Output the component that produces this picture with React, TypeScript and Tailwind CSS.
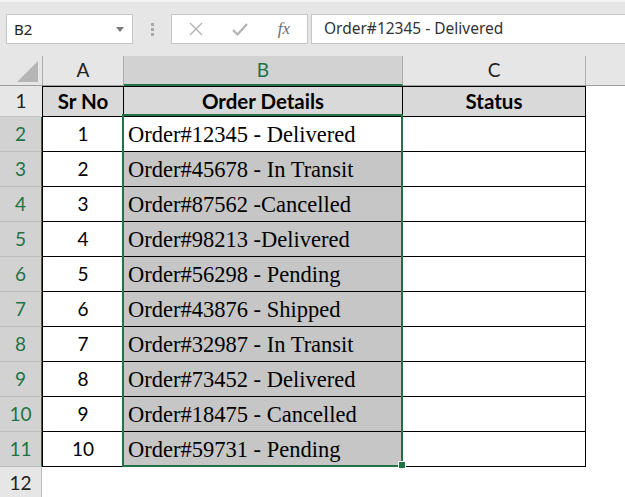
import { clsx } from 'clsx';

const ROWS: [string, string][] = [
  ['1', 'Order#12345 - Delivered'],
  ['2', 'Order#45678 - In Transit'],
  ['3', 'Order#87562 -Cancelled'],
  ['4', 'Order#98213 -Delivered'],
  ['5', 'Order#56298 - Pending'],
  ['6', 'Order#43876 - Shipped'],
  ['7', 'Order#32987 - In Transit'],
  ['8', 'Order#73452 - Delivered'],
  ['9', 'Order#18475 - Cancelled'],
  ['10', 'Order#59731 - Pending'],
];

const SANS = "font-['Lato','Noto_Sans',sans-serif]";
const UI = "font-['Noto_Sans','Open_Sans',sans-serif]";

function FormulaBar() {
  return (
    <div className="flex h-[56px] items-start border-t-2 border-[#f3f3f3] bg-[#e6e6e6] pl-[6px] pt-[12px]">
      {/* name box */}
      <div className={clsx('flex h-[30px] w-[127px] items-center justify-between border border-[#c6c6c6] bg-white pl-[7px] pr-[8px] text-[15px] text-[#222]', UI)}>
        <span>B2</span>
        <svg width="8" height="5" viewBox="0 0 8 5">
          <path d="M0 0h8L4 5z" fill="#7a7a7a" />
        </svg>
      </div>
      <div className="flex h-[30px] w-[38px] flex-col items-center justify-center gap-[2px]">
        <span className="h-[3px] w-[3px] bg-[#a8a8a8]" />
        <span className="h-[3px] w-[3px] bg-[#a8a8a8]" />
        <span className="h-[3px] w-[3px] bg-[#a8a8a8]" />
      </div>
      {/* cancel / enter / fx */}
      <div className="flex h-[30px] w-[137px] items-center border border-[#c6c6c6] bg-white">
        <div className="flex w-[46px] justify-center pl-[2px]">
          <svg width="14" height="14" viewBox="0 0 14 14">
            <path d="M1 1l12 12M13 1L1 13" stroke="#b3b3b3" strokeWidth="1.4" />
          </svg>
        </div>
        <div className="flex w-[44px] justify-center">
          <svg width="16" height="13" viewBox="0 0 16 13">
            <path d="M1 7l4.5 4.5L15 1" stroke="#b3b3b3" strokeWidth="2.2" fill="none" />
          </svg>
        </div>
        <div className="flex w-[44px] justify-center font-['Liberation_Serif',serif] text-[17px] italic text-[#6d6d6d]">
          fx
        </div>
      </div>
      <div className={clsx('ml-[3px] flex h-[30px] flex-1 items-center border border-r-0 border-[#c6c6c6] bg-white pl-[12px] text-[15.5px] text-[#333]', UI)}>
        Order#12345 - Delivered
      </div>
    </div>
  );
}

function ColumnHeaders() {
  return (
    <div className={clsx('flex h-[30px] border-b border-[#9e9e9e] bg-[#e6e6e6] text-[19px] text-[#222]', SANS)}>
      <div className="relative w-[42px]">
        <svg className="absolute bottom-[3px] right-[4px]" width="21" height="21" viewBox="0 0 21 21">
          <path d="M21 0V21H0z" fill="#b5b5b5" />
        </svg>
      </div>
      <div className="flex w-[82px] items-center justify-center border-l border-r border-[#ababab]">A</div>
      <div className="-mb-px flex w-[279px] items-center justify-center border-b-2 border-r border-b-[#217346] border-r-[#ababab] bg-[#d2d2d2] text-[#217346]">
        B
      </div>
      <div className="flex w-[183px] items-center justify-center border-r border-[#ababab]">C</div>
      <div className="flex-1" />
    </div>
  );
}

export default function App() {
  return (
    <div className="relative h-[497px] w-[625px] overflow-hidden bg-white">
      <FormulaBar />
      <ColumnHeaders />

      {/* row 1: table headings */}
      <div className={clsx('flex h-[31px] text-[20.5px] text-black', SANS)}>
        <div className="flex w-[42px] items-center justify-center border-b border-[#c4c4c4] bg-[#e6e6e6] text-[19px] text-[#222]">1</div>
        <div className="flex w-[82px] items-center justify-center border border-black bg-[#d9d9d9] font-bold">Sr No</div>
        <div className="flex w-[279px] items-center justify-center border-y border-r border-black bg-[#d9d9d9] font-bold">
          Order Details
        </div>
        <div className="flex w-[183px] items-center justify-center border-y border-r border-black bg-[#d9d9d9] font-bold">
          Status
        </div>
      </div>

      {ROWS.map(([no, order], i) => (
        <div key={no} className="flex h-[35px] text-black">
          <div
            className={clsx(
              'flex w-[42px] items-center justify-center border-b border-r border-b-[#bdbdbd] border-r-[#217346] bg-[#d2d2d2] text-[19px] text-[#217346]',
              SANS,
            )}
          >
            {i + 2}
          </div>
          <div className={clsx('flex w-[82px] items-center justify-center border-b border-l border-r border-black text-[19px]', SANS)}>
            {no}
          </div>
          <div
            className={clsx(
              "flex w-[279px] items-center border-b border-r border-black pl-[4px] pt-[1px] font-['Liberation_Serif','Times_New_Roman',serif] text-[22.5px]",
              i === 0 ? 'bg-white' : 'bg-[#c6c6c6]',
            )}
          >
            {order}
          </div>
          <div className="w-[183px] border-b border-r border-black" />
        </div>
      ))}

      {/* row 12 */}
      <div className={clsx('flex h-[32px] text-[19px]', SANS)}>
        <div className="flex w-[42px] items-center justify-center border-r border-[#bdbdbd] bg-[#e6e6e6] text-[#222]">12</div>
      </div>

      {/* selection outline B2:B11 with fill handle */}
      <div className="pointer-events-none absolute left-[122px] top-[114px] h-[353px] w-[281px] border-2 border-[#217346]" />
      <div className="pointer-events-none absolute left-[398px] top-[461px] h-[8px] w-[8px] border border-white bg-[#217346]" />
    </div>
  );
}
